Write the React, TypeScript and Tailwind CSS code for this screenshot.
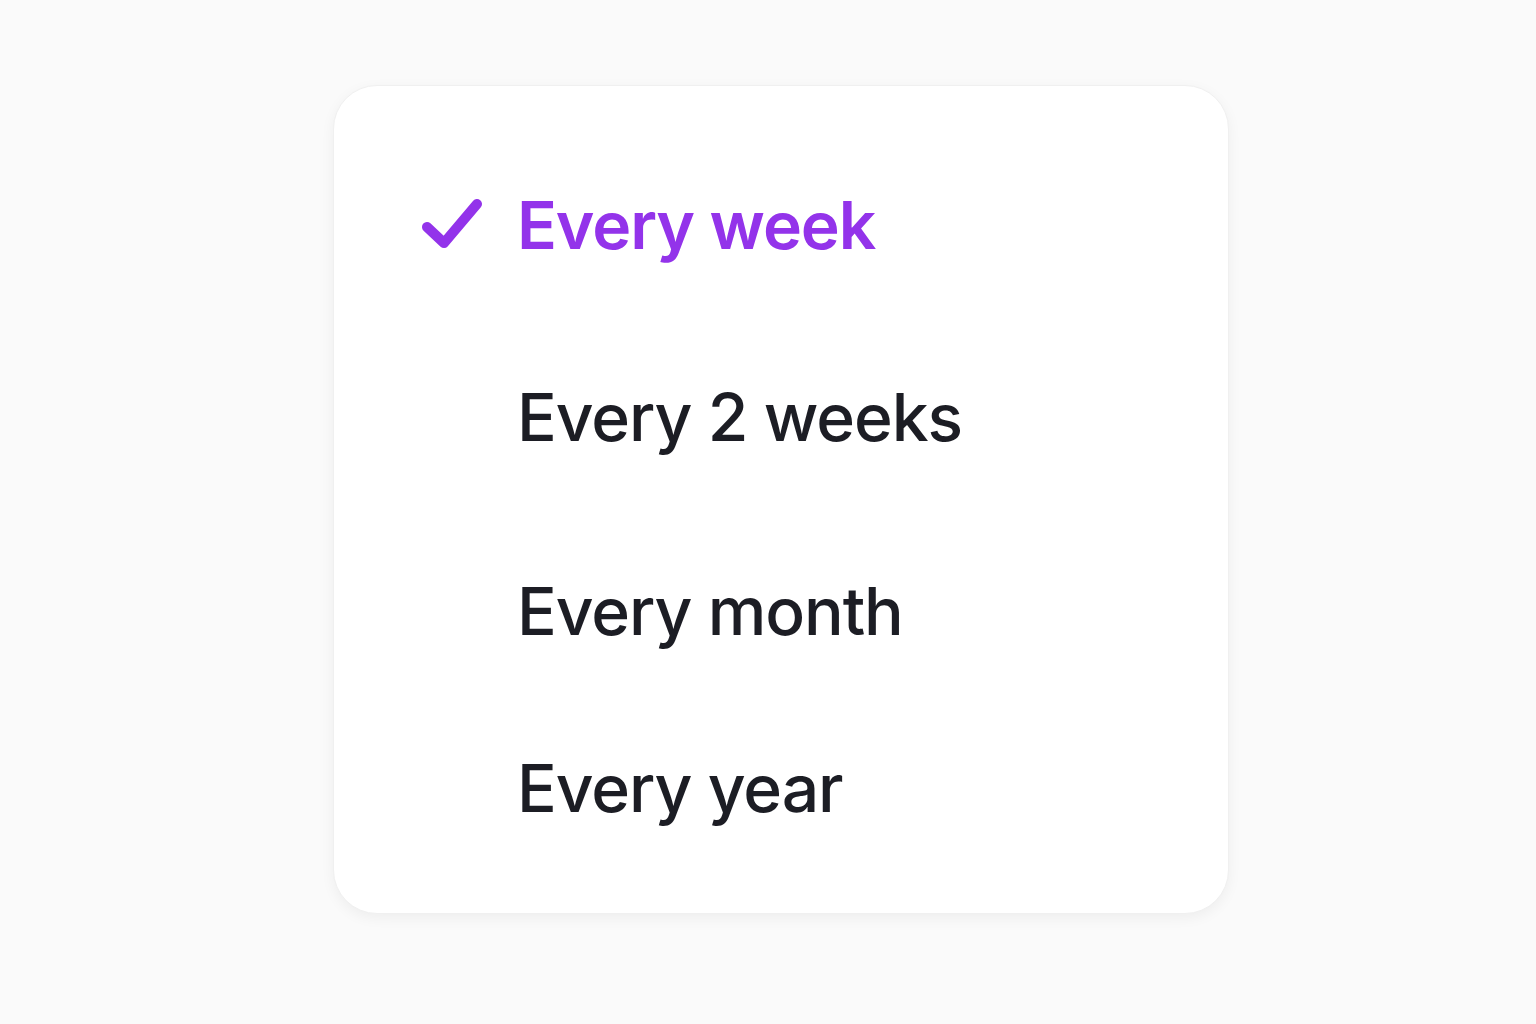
import React from "react";

// ─── Data ─────────────────────────────────────────────────────────────────────

const options = [
  { label: "Every week", selected: true, mt: "mt-0" },
  { label: "Every 2 weeks", selected: false, mt: "mt-[126px]" },
  { label: "Every month", selected: false, mt: "mt-[128px]" },
  { label: "Every year", selected: false, mt: "mt-[111px]" },
];

const Check = () => (
  <svg width="62" height="56" viewBox="0 0 62 56" fill="none" className="shrink-0">
    <path
      d="M6 30 L23 46 L56 7"
      stroke="#9333ea"
      strokeWidth="10"
      strokeLinecap="round"
      strokeLinejoin="round"
    />
  </svg>
);

// ─── Main ─────────────────────────────────────────────────────────────────────

export default function App() {
  return (
    <div
      className="min-h-screen w-full bg-[#fafafa] flex justify-center pl-[26px]"
      style={{ fontFamily: "Inter, 'Noto Sans', sans-serif" }}
    >
      <div className="mt-[85px] w-[896px] h-[829px] bg-white rounded-[44px] border border-[#f0f0f0] shadow-[0_4px_14px_rgba(0,0,0,0.05)] pt-[106px] pl-[87px]">
        <ul className="flex flex-col">
          {options.map((o) => (
            <li key={o.label} className={`${o.mt} flex items-center h-[66px]`}>
              <div className="w-[96px] flex items-center">
                {o.selected && <Check />}
              </div>
              <span
                className={`text-[66px] leading-none tracking-[-1.1px] ${
                  o.selected ? "text-[#9333ea] font-semibold" : "text-[#1c1d24] font-medium"
                }`}
              >
                {o.label}
              </span>
            </li>
          ))}
        </ul>
      </div>
    </div>
  );
}
